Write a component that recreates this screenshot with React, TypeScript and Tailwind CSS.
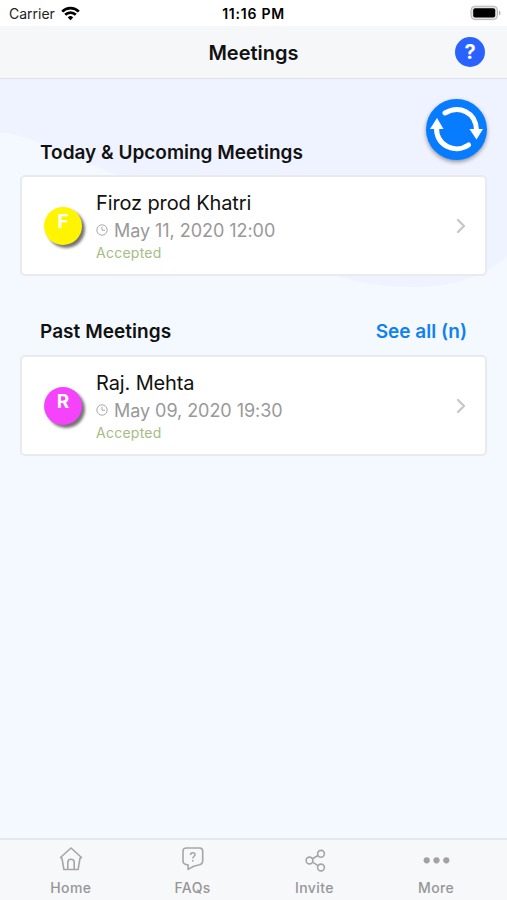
import { ChevronRight } from "lucide-react"

type Meeting = {
  name: string
  initial: string
  date: string
  status: string
  avatar: string
}

const upcoming: Meeting = { name: "Firoz prod Khatri", initial: "F", date: "May 11, 2020 12:00", status: "Accepted", avatar: "bg-[#fff500]" }
const past: Meeting = { name: "Raj. Mehta", initial: "R", date: "May 09, 2020 19:30", status: "Accepted", avatar: "bg-[#f542fb]" }

function StatusBar() {
  return (
    <div className="grid h-[26px] shrink-0 grid-cols-[1fr_auto_1fr] items-center bg-white pl-[9px] pr-[9px] text-[14px] text-[#222]">
      <div className="flex items-center gap-[6px] pt-px">
        <span>Carrier</span>
        <svg width="19" height="15" viewBox="0 0 19 15" className="mb-px" fill="none" stroke="#000" strokeWidth="2.7">
          <path d="M1.2 5.6a11.7 11.7 0 0 1 16.6 0" />
          <path d="M4.2 8.8a7.5 7.5 0 0 1 10.6 0" />
          <path d="M9.5 14.2 6.8 11.4a3.8 3.8 0 0 1 5.4 0z" fill="#000" stroke="none" />
        </svg>
      </div>
      <span className="text-center font-semibold tracking-[0.75px] whitespace-nowrap text-black">11:16 PM</span>
      <svg width="31" height="16" viewBox="0 0 31 16" className="-mr-[3px] justify-self-end">
        <rect x="1" y="1.2" width="26.5" height="13.4" rx="4" fill="#e2e2e2" stroke="#b5b5b5" strokeWidth="1" />
        <rect x="3.2" y="3.2" width="22" height="9.4" rx="2" fill="#000" />
        <path d="M29 5.5v5c2-1 2-4 0-5z" fill="#aaa" />
      </svg>
    </div>
  )
}

function RefreshIcon() {
  return (
    <svg width="61" height="61" viewBox="0 0 61 61" fill="none" stroke="#fff" strokeWidth="5" strokeLinecap="round">
      <path d="M19 14C33 6 50 13 50.5 31" />
      <path d="M42.5 46C29 55 10 47 10.5 28" />
      <path d="M43.5 30h13.5l-6.5 10.5z" fill="#fff" stroke="none" />
      <path d="M4 30h13.5L11 19z" fill="#fff" stroke="none" />
    </svg>
  )
}

function MeetingCard({ meeting }: { meeting: Meeting }) {
  return (
    <div className="mx-5 flex h-[101px] items-center rounded-[5px] border-2 border-[#e8eaee] bg-white pl-[22px] pr-[12px]">
      <div className={`flex size-[38px] shrink-0 justify-center rounded-full pt-1 text-[19px] leading-[21px] font-bold text-white shadow-[3px_3px_3px_rgba(0,0,0,0.55)] ${meeting.avatar}`}>
        {meeting.initial}
      </div>
      <div className="ml-[14px] flex-1 whitespace-nowrap">
        <p className="h-[28px] pt-px text-[20px] leading-[27px] tracking-[-0.12px] text-[#111]">{meeting.name}</p>
        <div className="flex h-[26px] items-center gap-[6px] text-[18px] tracking-[-0.05px] text-[#999]">
          <svg width="12" height="12" viewBox="0 0 12 12" fill="none" stroke="#aaa">
            <circle cx="6" cy="6" r="5.2" />
            <path d="M6 2.8V6.2H9" />
          </svg>
          <span>{meeting.date}</span>
        </div>
        <p className="h-[19px] text-[14px] leading-[19px] tracking-[0.25px] text-[#a5bc85]">{meeting.status}</p>
      </div>
      <ChevronRight size={24} strokeWidth={2.4} className="text-[#c8c8c8]" />
    </div>
  )
}

function TabBar() {
  const tabs = [
    {
      label: "Home",
      icon: (
        <path d="M2.5 11.5 13 2 23.5 11.5 22 12.3 20.1 23.5H5.9L4 12.3zM9.8 23.5v-7a3.2 3.2 0 0 1 6.4 0v7" />
      ),
    },
    {
      label: "FAQs",
      icon: (
        <>
          <path d="M6.5 2h13q3.2 0 3.2 3.2v9.8q0 3.2-3.2 3.7c-4 .4-7 1.4-11.5 4.6l.2-4.3Q3 18.500 3 15V5.200Q3 2 6.500 2z" />
          <path d="M10.5 9c0-3 4.5-3 4.5-.4 0 2-2.2 1.8-2.2 3.8M12.8 14v1.5" />
        </>
      ),
    },
    {
      label: "Invite",
      icon: (
        <>
          <circle cx="7.500" cy="14.500" r="3.400" />
          <circle cx="19" cy="7.800" r="3.400" />
          <circle cx="19" cy="21.500" r="3.400" />
          <path d="M10.500 12.800l5.500-3.300M10.500 16.200l5.500 3.500" />
        </>
      ),
    },
    {
      label: "More",
      icon: (
        <g fill="#a2a2a4" stroke="none">
          <circle cx="2.700" cy="14.300" r="3.100" />
          <circle cx="12.500" cy="14.300" r="3.100" />
          <circle cx="22.300" cy="14.300" r="3.100" />
        </g>
      ),
    },
  ]

  return (
    <nav className="grid h-[62px] shrink-0 grid-cols-4 border-t-2 border-[#e5e9ee] bg-[#f7f8fa] px-[10px] pt-[6px]">
      {tabs.map((tab) => (
        <div key={tab.label} className="flex flex-col items-center">
          <svg width="25" height="26" viewBox="0 0 25 26" fill="none" stroke="#a6a6a8" strokeWidth="1.6" strokeLinejoin="round" className="overflow-visible">
            {tab.icon}
          </svg>
          <span className="mt-[6px] text-[14px] leading-[19px] font-medium tracking-[0.4px] text-[#969698]">{tab.label}</span>
        </div>
      ))}
    </nav>
  )
}

export default function App() {
  return (
    <div className="flex h-[900px] w-[507px] flex-col overflow-hidden bg-[#f4f9ff] font-[Inter,sans-serif]">
      <StatusBar />
      <header className="grid h-[53px] shrink-0 grid-cols-[1fr_auto_1fr] items-center border-b border-[#dde1e7] bg-[#f6f7f9] px-[22px]">
        <h1 className="col-start-2 pt-px text-[20px] font-semibold text-[#111]">Meetings</h1>
        <button className="flex size-[30px] items-center justify-center justify-self-end rounded-full bg-[#2962ff] text-[20px] font-bold text-white">?</button>
      </header>

      <main className="relative flex-1">
        <svg className="absolute top-0 left-0" width="507" height="210" viewBox="0 0 507 210">
          <path d="M0 0H507V177C485 197 455 208 415 208C325 208 300 176 210 137C150 111 115 93 65 76C40 63 25 57 0 53Z" fill="#eff3ff" />
        </svg>
        <div className="relative">
          <h2 className="pt-[62px] pl-10 text-[19px] leading-[24px] font-semibold whitespace-nowrap text-[#111]">Today &amp; Upcoming Meetings</h2>
          <div className="mt-[10px]">
            <MeetingCard meeting={upcoming} />
          </div>
          <div className="mt-[44px] mb-[11px] flex justify-between pr-10 pl-10 text-[19px] leading-[24px] font-semibold">
            <h2 className="tracking-[0.05px] text-[#111]">Past Meetings</h2>
            <a className="text-[#1080f5]">See all (n)</a>
          </div>
          <MeetingCard meeting={past} />
          <button className="absolute top-[20px] right-[20px] size-[61px] rounded-full bg-[#087cff] shadow-[0_2px_4px_rgba(0,0,0,0.4)]">
            <RefreshIcon />
          </button>
        </div>
      </main>

      <TabBar />
    </div>
  )
}
